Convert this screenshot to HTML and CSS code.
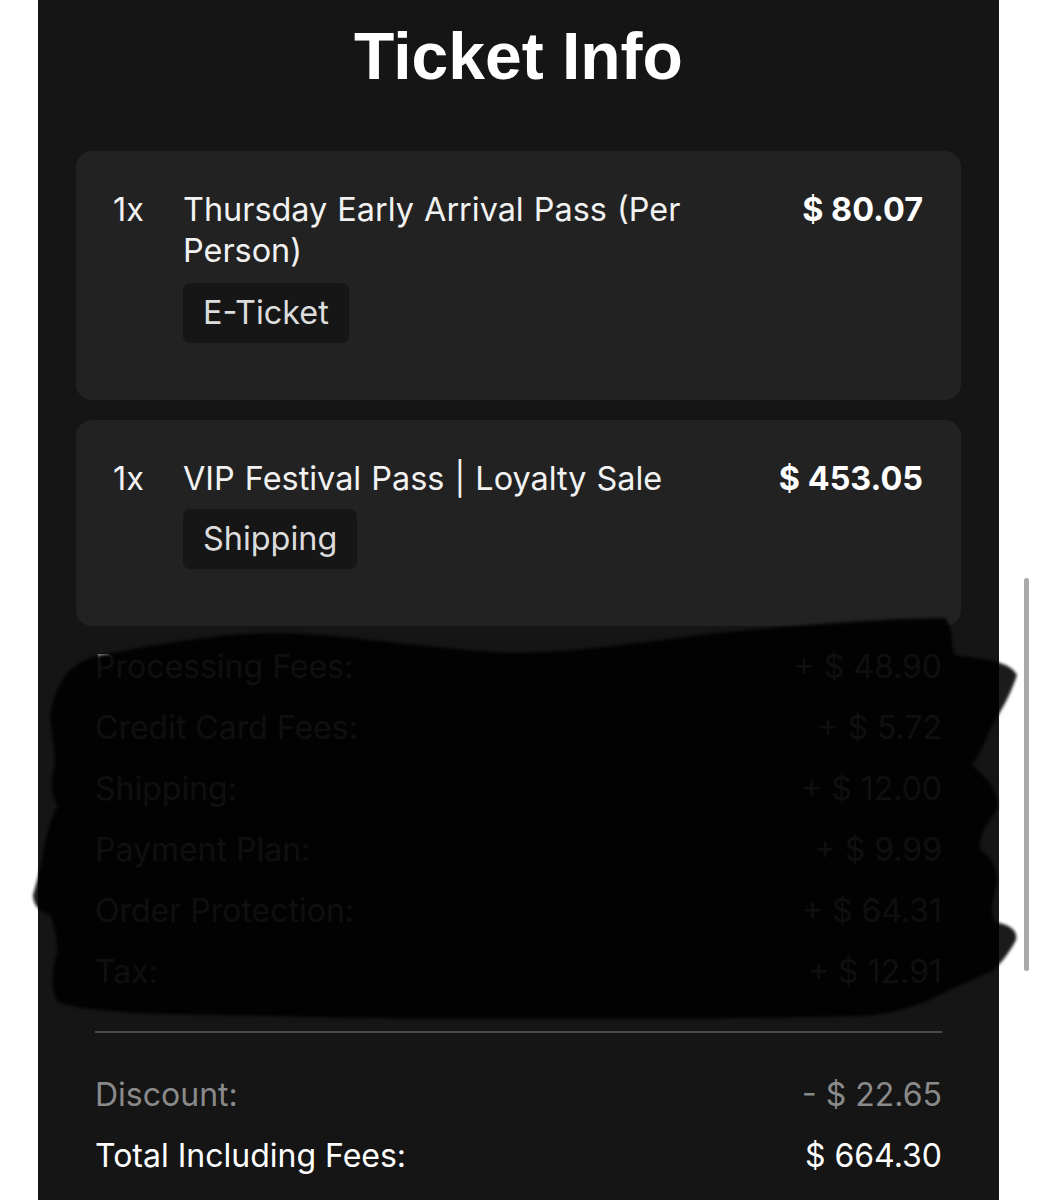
FILE: index.html
```html
<!DOCTYPE html>
<html lang="en">
<head>
<meta charset="utf-8">
<title>Ticket Info</title>
<link rel="stylesheet" href="styles.css">
</head>
<body>
<div class="page">
  <main class="panel">
    <h1 class="title">Ticket Info</h1>
    <section class="items">
      <article class="item">
        <span class="qty">1x</span>
        <div class="info">
          <div class="name">Thursday Early Arrival Pass (Per Person)</div>
          <span class="tag">E-Ticket</span>
        </div>
        <span class="price">$ 80.07</span>
      </article>
      <article class="item">
        <span class="qty">1x</span>
        <div class="info">
          <div class="name">VIP Festival Pass | Loyalty Sale</div>
          <span class="tag tag-tight">Shipping</span>
        </div>
        <span class="price">$ 453.05</span>
      </article>
    </section>
    <section class="fees">
      <div class="row"><span>Processing Fees:</span><span>+ $ 48.90</span></div>
      <div class="row"><span>Credit Card Fees:</span><span>+ $ 5.72</span></div>
      <div class="row"><span>Shipping:</span><span>+ $ 12.00</span></div>
      <div class="row"><span>Payment Plan:</span><span>+ $ 9.99</span></div>
      <div class="row"><span>Order Protection:</span><span>+ $ 64.31</span></div>
      <div class="row"><span>Tax:</span><span>+ $ 12.91</span></div>
    </section>
    <hr class="divider">
    <section class="totals">
      <div class="row"><span>Discount:</span><span>- $ 22.65</span></div>
      <div class="row total"><span>Total Including Fees:</span><span>$ 664.30</span></div>
    </section>
  </main>
  <svg class="scribble" viewBox="0 0 1037 1200" width="1037" height="1200" aria-hidden="true">
    <defs>
      <filter id="soft" x="-5%" y="-5%" width="110%" height="110%">
        <feGaussianBlur stdDeviation="1.6"/>
      </filter>
    </defs>
    <path filter="url(#soft)" d="M 93 657 C 150 645, 220 633, 277 633 C 330 633, 400 645, 493 652 C 560 655, 620 645, 717 633 C 820 623, 900 618, 945 618 C 955 630, 950 645, 955 655 C 990 660, 1010 662, 1017 675 C 1012 690, 1005 705, 995 720 C 985 740, 980 755, 972 765 C 990 780, 1000 795, 997 810 C 985 825, 978 840, 980 850 C 995 860, 1000 875, 995 890 C 992 905, 990 915, 995 922 C 1010 925, 1018 930, 1016 940 C 1008 955, 1000 965, 990 972 C 960 985, 950 990, 940 995 C 920 1005, 900 1012, 866 1016 C 700 1020, 400 1020, 269 1016 C 200 1015, 150 1014, 135 1013 C 100 1010, 70 1008, 58 1002 C 50 990, 52 970, 57 953 C 58 945, 55 925, 50 915 C 40 912, 33 905, 33 895 C 36 885, 40 870, 43 855 C 45 840, 50 820, 58 805 C 50 795, 50 780, 55 765 C 55 750, 52 735, 50 717 C 52 700, 58 685, 68 672 C 75 665, 85 660, 93 657 Z"/>
  </svg>
  <div class="scrollbar"></div>
</div>
</body>
</html>
```
FILE: styles.css
```css
html, body {
  margin: 0;
  padding: 0;
  background: #ffffff;
}

body {
  font-family: Inter, "Noto Sans", sans-serif;
}

.page {
  position: relative;
  width: 1037px;
  height: 1200px;
  overflow: hidden;
}

.panel {
  margin-left: 38px;
  width: 961px;
  height: 1200px;
  box-sizing: border-box;
  background: #151515;
  padding: 18px 38px 0;
}

.title {
  margin: 0;
  font: 700 66px/76px "Liberation Sans", Arial, sans-serif;
  color: #ffffff;
  text-align: center;
}

.items {
  margin-top: 57px;
  display: flex;
  flex-direction: column;
  gap: 20px;
}

.item {
  display: grid;
  grid-template-columns: 70px 1fr auto;
  background: #222222;
  border-radius: 16px;
  padding: 38px 38px 57px 37px;
  font-size: 32.4px;
  line-height: 41px;
  color: #f2f2f2;
}

.name {
  word-spacing: 1px;
}

.price {
  margin-left: 40px;
  font-weight: 700;
  color: #ffffff;
}

.tag {
  display: inline-block;
  margin-top: 12px;
  padding: 0 20px;
  background: #161616;
  border-radius: 7px;
  line-height: 60px;
  color: #dcdcdc;
}

.tag-tight {
  margin-top: 10px;
}

.fees {
  margin-top: 10px;
  padding: 0 19px;
}

.row {
  display: flex;
  justify-content: space-between;
  font-size: 32px;
  line-height: 61px;
  color: #8a8a8a;
}

.divider {
  margin: 29px 19px 0;
  border: 0;
  height: 2px;
  background: #4a4a4a;
}

.totals {
  margin-top: 31px;
  padding: 0 19px;
}

.total {
  color: #ffffff;
}

.scribble {
  position: absolute;
  left: 0;
  top: 0;
  pointer-events: none;
}

.scribble path {
  fill: #000000;
  opacity: 0.89;
}

.scrollbar {
  position: absolute;
  left: 1024px;
  top: 578px;
  width: 5px;
  height: 393px;
  border-radius: 3px;
  background: #a9a9a9;
}
```
